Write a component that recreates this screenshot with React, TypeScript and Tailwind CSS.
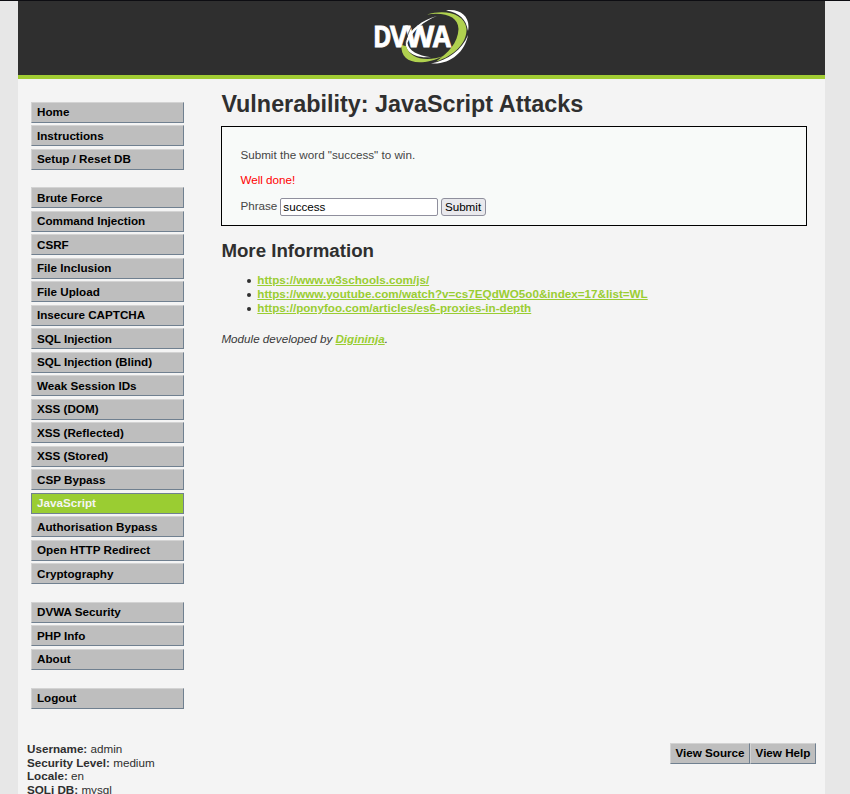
import React from "react";

const groups: string[][] = [
  ["Home", "Instructions", "Setup / Reset DB"],
  [
    "Brute Force",
    "Command Injection",
    "CSRF",
    "File Inclusion",
    "File Upload",
    "Insecure CAPTCHA",
    "SQL Injection",
    "SQL Injection (Blind)",
    "Weak Session IDs",
    "XSS (DOM)",
    "XSS (Reflected)",
    "XSS (Stored)",
    "CSP Bypass",
    "JavaScript",
    "Authorisation Bypass",
    "Open HTTP Redirect",
    "Cryptography",
  ],
  ["DVWA Security", "PHP Info", "About"],
  ["Logout"],
];

const links = [
  "https://www.w3schools.com/js/",
  "https://www.youtube.com/watch?v=cs7EQdWO5o0&index=17&list=WL",
  "https://ponyfoo.com/articles/es6-proxies-in-depth",
];

const info = [
  ["Username:", "admin"],
  ["Security Level:", "medium"],
  ["Locale:", "en"],
  ["SQLi DB:", "mysql"],
];

function Logo() {
  return (
    <svg width="100" height="60" viewBox="0 0 100 60" className="block">
      <path d="M53 5.500 C72 0 91 5 92.500 20 C93 34 80 47 62 52.500 C74 44 84 34 84.500 20 C84 8 72 3 53 5.500 Z" fill="#b0d14f" />
      <path d="M72 1.500 C86 -1 97 8 94 22 C92 10 86 4 72 1.500 Z" fill="#fff" />
      <path d="M94 26 C91 43 76 56 57 54.500 C74 51 88 41 94 26 Z" fill="#fff" />
      <path d="M63 7 C48 11 36 20 31.500 33 C31 44 42 49 57 48.300 C44 46.500 34.500 42 33.500 34 C38 22 50 12 63 7 Z" fill="#fff" />
      <path d="M27.500 36 C26 53 44 59 70 47 C52 53 36 50 32 37 Z" fill="#b0d14f" />
      <text
        y="38.400"
        fill="#fff"
        stroke="#fff"
        strokeWidth="0.800"
        className="font-['Open_Sans',sans-serif] text-[28.500px] font-bold"
      >
        <tspan x="-0.900" textLength="18.500" lengthAdjust="spacingAndGlyphs">D</tspan>
        <tspan x="16" textLength="17.500" lengthAdjust="spacingAndGlyphs">V</tspan>
        <tspan x="31.800" textLength="28.500" lengthAdjust="spacingAndGlyphs">W</tspan>
        <tspan x="58.800" textLength="18.300" lengthAdjust="spacingAndGlyphs">A</tspan>
      </text>
      <path d="M38 17 C34.500 23 32 29 31 37" fill="none" stroke="#2f2f2f" strokeWidth="0.700" />
    </svg>
  );
}

function MenuItem({ label }: { label: string }) {
  const active = label === "JavaScript";
  return (
    <li
      className={
        "mb-[2.500px] h-[21px] w-[153px] border pt-[0.300px] pl-[5px] text-[11.670px] leading-[18px] font-bold " +
        (active
          ? "border-[#708090] bg-[#9acd32] text-[#f4f4f4]"
          : "border-t-[#d3d3d3] border-r-[#708090] border-b-[#708090] border-l-[#d3d3d3] bg-[#bebebe] text-black")
      }
    >
      {label}
    </li>
  );
}

const viewButton =
  "h-[21px] border border-t-[#d3d3d3] border-r-[#708090] border-b-[#708090] border-l-[#d3d3d3] bg-[#bebebe] pb-[2px] text-[11.670px] leading-[17px] font-bold text-black";

export default function App() {
  return (
    <div className="h-[794px] overflow-hidden border-t border-[#0d0d12] bg-[#e7e7e7] font-['Liberation_Sans',Arial,sans-serif] text-[11.675px] text-[#2f2f2f]">
      <div className="ml-[18px] flex h-full w-[807px] flex-col bg-[#f4f4f4]">
        <header className="flex h-[78px] shrink-0 border-b-4 border-[#a1cc33] bg-[#2f2f2f] pt-[8px] pl-[356px]">
          <Logo />
        </header>
        <div className="flex h-[655px] shrink-0">
          <nav className="w-[203.400px] pt-[22.900px] pl-[13px]">
            {groups.map((group) => (
              <ul key={group[0]} className="flex flex-col pb-[15.050px]">
                {group.map((label) => (
                  <MenuItem key={label} label={label} />
                ))}
              </ul>
            ))}
          </nav>
          <main className="w-[585.600px] pt-[12px]">
            <h1 className="text-[23.370px] leading-[27px] font-bold">Vulnerability: JavaScript Attacks</h1>
            <div className="mt-[8px] h-[100px] border border-black bg-[#f8faf9] px-[18px] pt-[21px] text-[#454545]">
              <p className="leading-[14px]">Submit the word "success" to win.</p>
              <p className="mt-[11px] leading-[14px] text-[#ff0000]">Well done!</p>
              <form className="mt-[11px] flex">
                <label className="pt-px leading-[14px]">Phrase</label>
                <input
                  defaultValue="success"
                  className="ml-[3px] h-[18px] w-[157.500px] rounded-[2px] border border-[#8f8f9d] bg-white px-[2px] pb-px leading-[15px] text-black"
                />
                <button
                  type="button"
                  className="ml-[2.700px] h-[18px] w-[45px] rounded-[3px] border border-[#8f8f9d] bg-[#e9e9ed] leading-[16px] text-black"
                >
                  Submit
                </button>
              </form>
            </div>
            <h2 className="mt-[14px] text-[18.700px] leading-[22px] font-bold">More Information</h2>
            <ul className="mt-[11px] pl-[26px] leading-[14px]">
              {links.map((link) => (
                <li key={link} className="flex items-center">
                  <span className="mt-px mr-[5.900px] size-[4px] rounded-full bg-[#2f2f2f]" />
                  <a className="font-bold text-[#9acd32] underline">{link}</a>
                </li>
              ))}
            </ul>
            <p className="mt-[17px] leading-[14px] text-[#383838] italic">
              Module developed by <a className="font-bold text-[#9acd32] underline">Digininja</a>.
            </p>
          </main>
        </div>
        <footer className="flex justify-between pt-[9px] pr-[9px] pl-[9px]">
          <div className="-mt-[0.800px] leading-[13.600px]">
            {info.map(([name, value]) => (
              <div key={name}>
                <b>{name}</b> {value}
              </div>
            ))}
          </div>
          <div className="flex">
            <button className={viewButton + " w-[80px]"}>View Source</button>
            <button className={viewButton + " w-[66px]"}>View Help</button>
          </div>
        </footer>
      </div>
    </div>
  );
}
